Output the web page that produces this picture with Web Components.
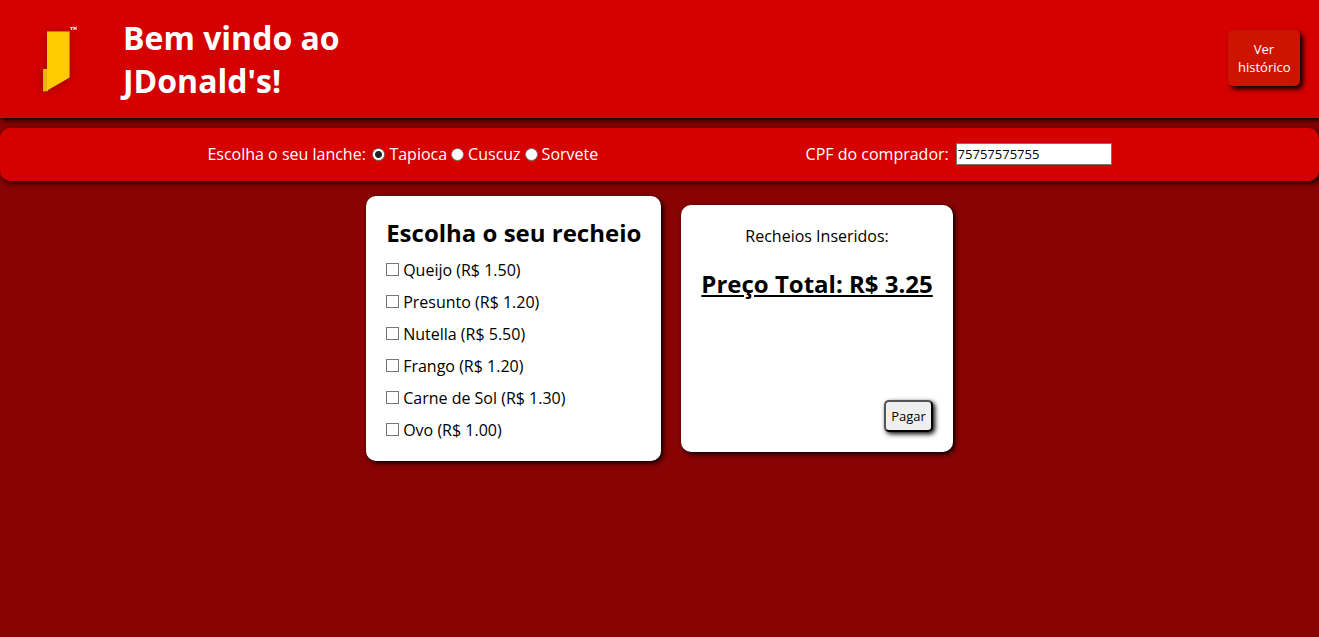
<!DOCTYPE html>
<html lang="pt-BR">
<head>
<meta charset="utf-8">
<title>JDonald's</title>
<style>
  body {
    margin: 0;
    min-height: 100vh;
    background: #880303;
    color: #000;
    font: 16px/22px "Open Sans", "Noto Sans", sans-serif;
    --red: #d50000;
    --shadow: 2px 2px 5px #000;
  }
</style>
</head>
<body>
<jd-app></jd-app>
<script>
  const define = (name, html) => customElements.define(name, class extends HTMLElement {
    constructor() {
      super();
      const template = document.createElement("template");
      template.innerHTML = html;
      this.attachShadow({ mode: "open" }).append(template.content.cloneNode(true));
    }
  });

  define("jd-logo", `
    <style>
      :host { display: block; width: 118px; height: 88px; flex: none; }
      svg { display: block; }
    </style>
    <svg width="118" height="88" viewBox="0 15 118 88" role="img" aria-label="JDonald's">
      <defs>
        <filter id="soft" x="-50%" y="-50%" width="200%" height="200%">
          <feDropShadow dx="0" dy="1" stdDeviation="4" flood-color="#700000" flood-opacity=".6"/>
        </filter>
      </defs>
      <g filter="url(#soft)">
        <path d="M43 69h5v22l-5 .5z" fill="#e9b400"/>
        <path d="M47 31.500h22.500v46L47 90.500z" fill="#ffcb00"/>
      </g>
      <path d="M70 27.500h3M71.500 27v3M74 30v-2.500l1 1 1-1v2.500" fill="none" stroke="#ffd9d9" stroke-width="1.200"/>
    </svg>`);

  define("jd-header", `
    <style>
      :host { display: block; }
      header {
        display: flex; align-items: center; gap: 5px;
        padding: 15px 19px 15px 0;
        background: var(--red); color: #fff; box-shadow: var(--shadow);
      }
      h1 { margin: 0; width: 260px; font-size: 32px; line-height: 43px; }
      button {
        margin: 0 0 2px auto; width: 72px; padding: 10px; border: 0; border-radius: 5px;
        background: #cd1400; color: inherit; font-family: inherit; font-size: 13px; line-height: 18px;
        box-shadow: 3px 3px 5px #000;
      }
    </style>
    <header>
      <jd-logo></jd-logo>
      <h1><slot></slot></h1>
      <button type="button">Ver histórico</button>
    </header>`);

  define("jd-order-bar", `
    <style>
      :host { display: block; }
      form {
        display: flex; justify-content: space-evenly; align-items: center;
        padding: 15px 0; border-radius: 10px;
        background: var(--red); color: #fff; box-shadow: var(--shadow);
      }
      fieldset, div { display: flex; align-items: center; gap: 4px; margin: 0; padding: 0 0 1px; border: 0; }
      fieldset span { width: 161px; }
      div label { width: 146px; }
      input[type="radio"] {
        appearance: none; box-sizing: border-box; width: 13px; height: 13px; margin: 0;
        border: 1px solid #767676; border-radius: 50%; background: #fff;
      }
      input[type="radio"]:checked { background: radial-gradient(circle, #222 3px, #fff 4px); }
      input[type="text"] {
        box-sizing: border-box; width: 156px; height: 22px; padding: 1px;
        border: 1px solid #767676; background: #fff; color: #000;
        font-family: inherit; font-size: 13px;
      }
    </style>
    <form>
      <fieldset>
        <span>Escolha o seu lanche:</span>
        <input type="radio" name="lanche" id="tapioca" checked><label for="tapioca">Tapioca</label>
        <input type="radio" name="lanche" id="cuscuz"><label for="cuscuz">Cuscuz</label>
        <input type="radio" name="lanche" id="sorvete"><label for="sorvete">Sorvete</label>
      </fieldset>
      <div>
        <label for="cpf">CPF do comprador:</label>
        <input type="text" id="cpf" value="75757575755">
      </div>
    </form>`);

  define("jd-card", `
    <style>
      :host {
        display: block; padding: 20px; border-radius: 10px;
        background: #fff; box-shadow: var(--shadow);
      }
    </style>
    <slot></slot>`);

  define("jd-option", `
    <style>
      :host { display: block; }
      label { display: flex; align-items: center; gap: 4px; }
      input {
        appearance: none; box-sizing: border-box; width: 13px; height: 13px;
        margin: 0 0 2px; border: 1px solid #767676; background: #fff;
      }
      input:checked { background: #333; box-shadow: inset 0 0 0 2px #fff; }
    </style>
    <label><input type="checkbox"><span><slot></slot></span></label>`);

  define("jd-fillings", `
    <style>
      :host { display: block; }
      div { display: grid; gap: 10px; }
      h2 { margin: 0; font-size: 24px; line-height: 33px; }
    </style>
    <jd-card><div>
      <h2>Escolha o seu recheio</h2>
      <jd-option>Queijo (R$ 1.50)</jd-option>
      <jd-option>Presunto (R$ 1.20)</jd-option>
      <jd-option>Nutella (R$ 5.50)</jd-option>
      <jd-option>Frango (R$ 1.20)</jd-option>
      <jd-option>Carne de Sol (R$ 1.30)</jd-option>
      <jd-option>Ovo (R$ 1.00)</jd-option>
    </div></jd-card>`);

  define("jd-summary", `
    <style>
      :host { display: block; }
      div { display: flex; flex-direction: column; align-items: center; }
      p { margin: 0; }
      h2 { margin: 20px 0 100px; font-size: 24px; line-height: 33px; text-decoration: underline; }
      button {
        align-self: flex-end; box-sizing: border-box; height: 32px; padding: 5px;
        border: 2px outset #000; border-radius: 5px;
        background: #efefef; color: #000; font-family: inherit; font-size: 13px; line-height: 18px;
        box-shadow: 2px 2px 5px #000;
      }
    </style>
    <jd-card><div>
      <p>Recheios Inseridos:</p>
      <h2>Preço Total: R$ 3.25</h2>
      <button type="button">Pagar</button>
    </div></jd-card>`);

  define("jd-app", `
    <style>
      :host { display: flex; flex-direction: column; gap: 10px; }
      main {
        display: flex; flex-wrap: wrap; justify-content: center; align-items: center;
        gap: 20px; padding: 5px 0 20px;
      }
    </style>
    <jd-header>Bem vindo ao JDonald's!</jd-header>
    <jd-order-bar></jd-order-bar>
    <main>
      <jd-fillings></jd-fillings>
      <jd-summary></jd-summary>
    </main>`);
</script>
</body>
</html>
